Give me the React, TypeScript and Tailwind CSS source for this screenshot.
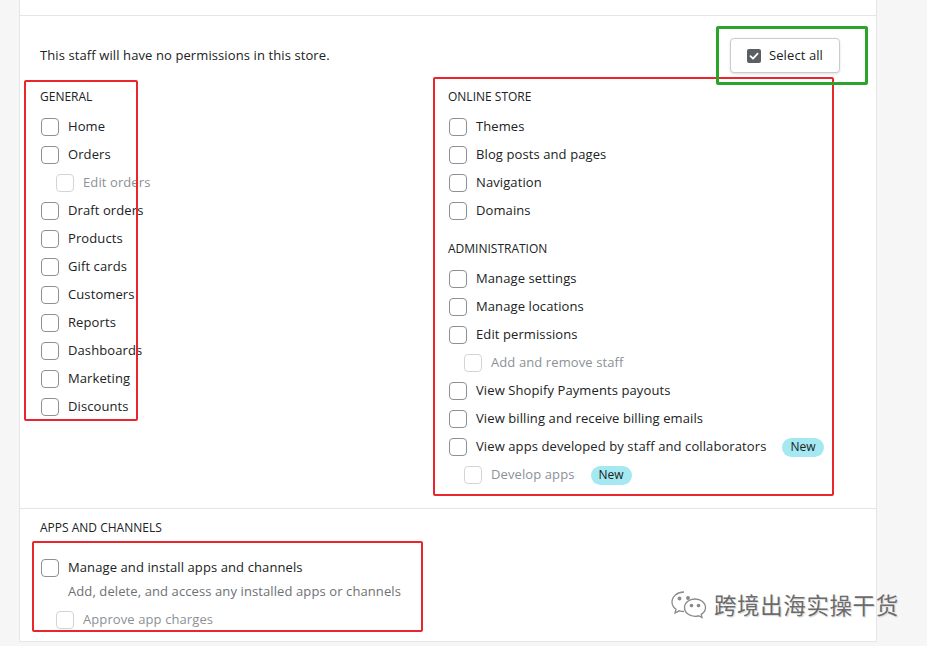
import React from "react"

type Item = { label: string; sub?: boolean; badge?: boolean }

const general: Item[] = [
    { label: "Home" },
    { label: "Orders" },
    { label: "Edit orders", sub: true },
    { label: "Draft orders" },
    { label: "Products" },
    { label: "Gift cards" },
    { label: "Customers" },
    { label: "Reports" },
    { label: "Dashboards" },
    { label: "Marketing" },
    { label: "Discounts" },
]

const onlineStore: Item[] = [
    { label: "Themes" },
    { label: "Blog posts and pages" },
    { label: "Navigation" },
    { label: "Domains" },
]

const administration: Item[] = [
    { label: "Manage settings" },
    { label: "Manage locations" },
    { label: "Edit permissions" },
    { label: "Add and remove staff", sub: true },
    { label: "View Shopify Payments payouts" },
    { label: "View billing and receive billing emails" },
    { label: "View apps developed by staff and collaborators", badge: true },
    { label: "Develop apps", sub: true, badge: true },
]

const Box = ({ disabled }: { disabled?: boolean }) => (
    <span
        className={
            "w-[18px] h-[18px] rounded-[4px] border-[1.5px] bg-white shrink-0 " +
            (disabled ? "border-[#d2d5d8]" : "border-[#8c9196]")
        }
    />
)

const Row = ({ item }: { item: Item }) => (
    <div className={"flex items-center h-7 " + (item.sub ? "pl-4" : "pl-px")}>
        <Box disabled={item.sub} />
        <span className={"ml-[9px] " + (item.sub ? "text-[#8c9196]" : "text-[#202223]")}>{item.label}</span>
        {item.badge && (
            <span className="ml-4 px-2 h-[19px] flex items-center rounded-full bg-[#a4e8f2] text-[12px] tracking-normal text-[#202223]">New</span>
        )}
    </div>
)

const Heading = ({ children, className = "" }: { children: React.ReactNode; className?: string }) => (
    <h3 className={"text-[12px] leading-4 tracking-normal text-[#202223] uppercase " + className}>{children}</h3>
)

export default function App() {
    return (
        <div
            className="relative flex h-[646px] w-[927px] overflow-hidden bg-[#f6f6f7] text-[13px] tracking-[0.1px]"
            style={{ fontFamily: '"Open Sans", "Noto Sans", sans-serif' }}
        >
            <div className="w-[19px] shrink-0" />
            <main className="w-[858px] shrink-0 bg-white border-l border-r border-[#e4e5e7] flex flex-col self-start">
                <div className="h-[16px] border-b border-[#e4e5e7]" />

                <section className="px-5 pt-[22px] pb-[19px] border-b border-[#e4e5e7]">
                    <div className="flex items-center justify-between h-[35px]">
                        <p className="text-[#202223]">This staff will have no permissions in this store.</p>
                        <button className="mr-4 h-[35px] w-[110px] flex items-center justify-center gap-2 rounded border border-[#c9cccf] bg-white text-[13px] text-[#202223] shadow-sm">
                            <svg width="14" height="14" viewBox="0 0 14 14">
                                <rect width="14" height="14" rx="2" fill="#5c5f62" />
                                <path d="M3.5 7.2 L6 9.6 L10.6 4.6" stroke="#fff" strokeWidth="1.8" fill="none" strokeLinecap="round" strokeLinejoin="round" />
                            </svg>
                            Select all
                        </button>
                    </div>

                    <div className="grid grid-cols-2 mt-4">
                        <div>
                            <Heading className="mb-2">General</Heading>
                            {general.map((it) => (
                                <Row key={it.label} item={it} />
                            ))}
                        </div>
                        <div>
                            <Heading className="mb-2">Online store</Heading>
                            {onlineStore.map((it) => (
                                <Row key={it.label} item={it} />
                            ))}
                            <Heading className="mt-4 mb-2">Administration</Heading>
                            {administration.map((it) => (
                                <Row key={it.label} item={it} />
                            ))}
                        </div>
                    </div>
                </section>

                <section className="px-5 pt-[11px] pb-[7px] border-b border-[#e4e5e7]">
                    <Heading>Apps and channels</Heading>
                    <div className="mt-[18px] flex items-center h-7 pl-px">
                        <Box />
                        <span className="ml-[9px] text-[#202223]">Manage and install apps and channels</span>
                    </div>
                    <p className="pl-7 h-5 flex items-center text-[#6d7175]">Add, delete, and access any installed apps or channels</p>
                    <div className="mt-1">
                        <Row item={{ label: "Approve app charges", sub: true }} />
                    </div>
                </section>
            </main>

            {/* annotation boxes */}
            <div className="absolute left-[24px] top-[80px] w-[114px] h-[341px] border-2 border-[#e8262b] rounded-[2px]" />
            <div className="absolute left-[433px] top-[77px] w-[401px] h-[419px] border-2 border-[#e8262b] rounded-[2px]" />
            <div className="absolute left-[32px] top-[541px] w-[391px] h-[91px] border-2 border-[#e8262b] rounded-[2px]" />
            <div className="absolute left-[716px] top-[26px] w-[152px] h-[59px] border-[3px] border-[#2aa52a] rounded-[2px]" />

            {/* watermark */}
            <div className="absolute left-[670px] top-[589px] flex items-center gap-[6px] text-[#6b6b6b]">
                <svg width="38" height="30" viewBox="0 0 38 30" fill="none" stroke="#8a8a8a" strokeWidth="1.3">
                    <path d="M14 3 C7 3 2 7.5 2 13 C2 16 3.5 18.5 6 20.3 L5 24 L9.2 21.8 C10.7 22.3 12.3 22.5 14 22.5" />
                    <path d="M25 10 C19 10 14.5 14 14.5 18.7 C14.5 23.4 19 27.3 25 27.3 C26.3 27.3 27.5 27.1 28.6 26.8 L32 28.6 L31.2 25.4 C33.6 23.8 35.5 21.4 35.5 18.7 C35.5 14 31 10 25 10 Z" />
                    <circle cx="9.5" cy="9.5" r="1.3" fill="#8a8a8a" />
                    <circle cx="18" cy="9" r="1.3" fill="#8a8a8a" />
                    <circle cx="21.5" cy="16.5" r="1.2" fill="#8a8a8a" />
                    <circle cx="28.5" cy="16.5" r="1.2" fill="#8a8a8a" />
                </svg>
                <span
                    className="text-[22.5px] leading-none tracking-[0.6px]"
                    style={{ fontFamily: '"Noto Sans CJK SC", sans-serif', textShadow: "0 0 2px #fff, 1px 1px 1px #ccc" }}
                >
                    跨境出海实操干货
                </span>
            </div>
        </div>
    )
}
